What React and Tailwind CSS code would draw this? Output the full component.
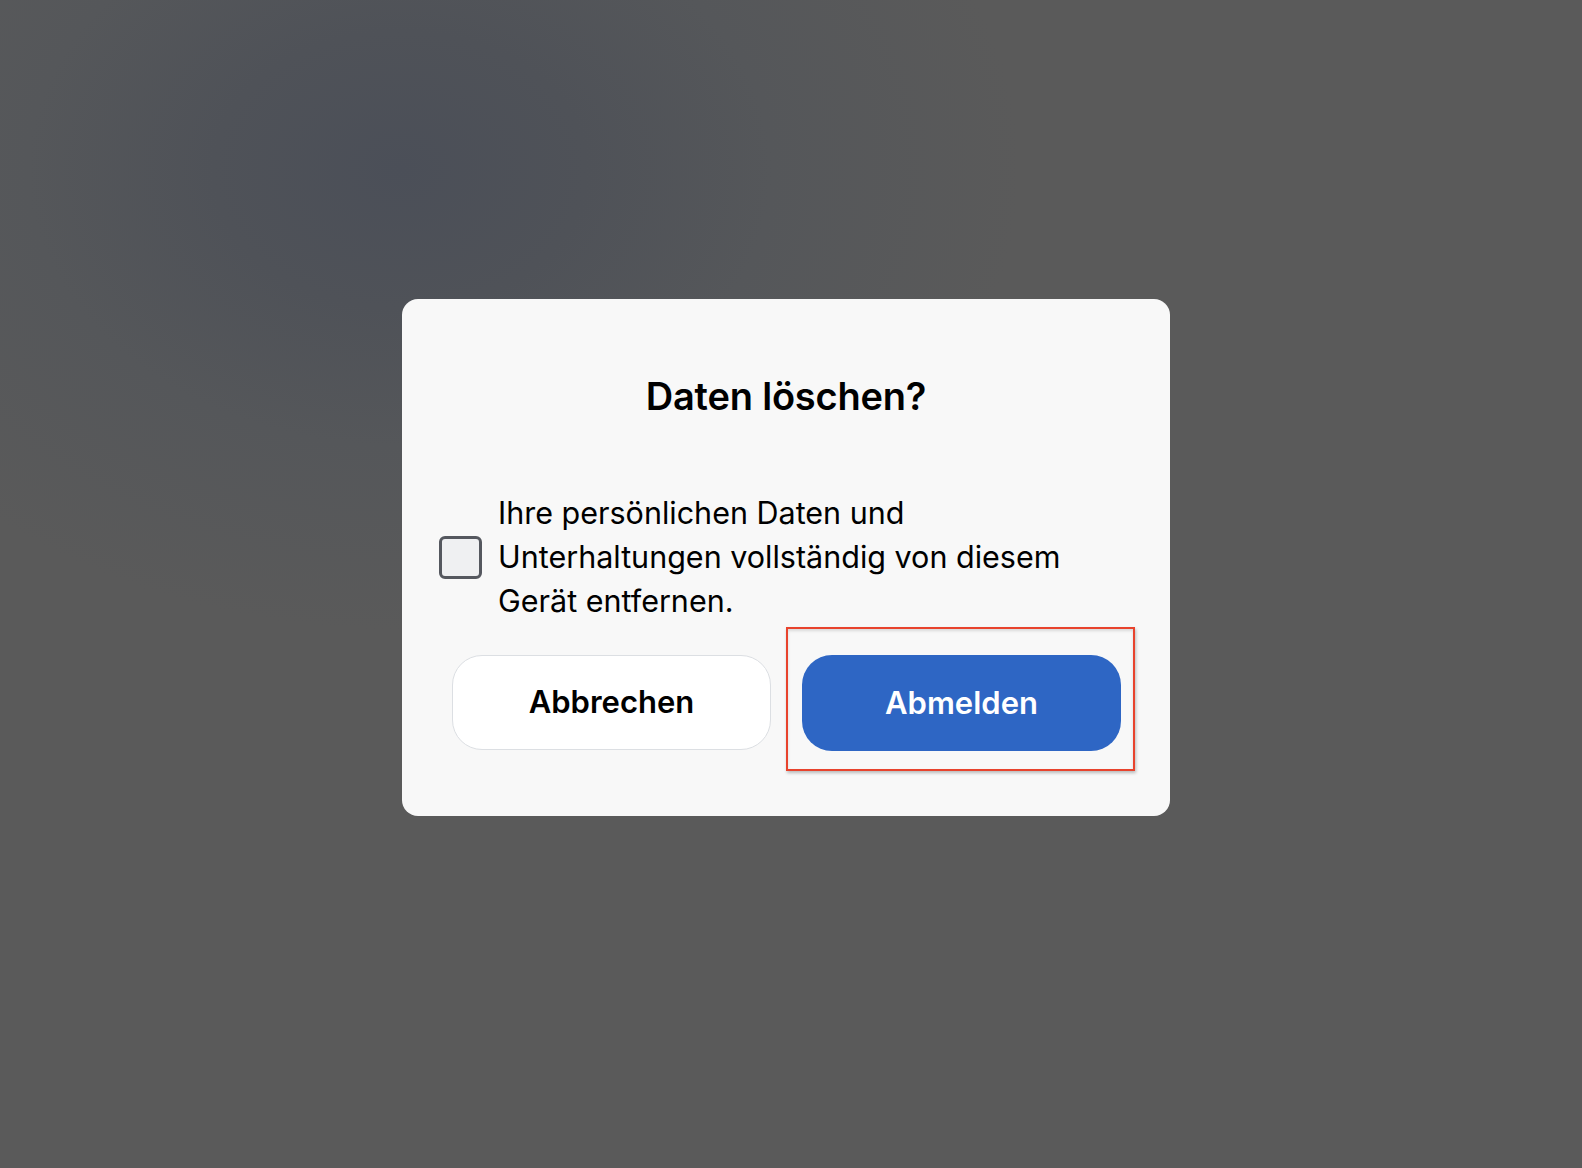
import React from "react";

export default function App() {
  return (
    <div
      className="min-h-screen w-full bg-[#5a5a5a] bg-[radial-gradient(ellipse_620px_460px_at_400px_170px,#4b4f58_0%,#4f5258_30%,#55575a_60%,#5a5a5a_100%)] pt-[299px] pl-[402px]"
      style={{ fontFamily: "Inter, 'Noto Sans', 'Liberation Sans', sans-serif" }}
    >
      <div className="w-[768px] h-[517px] rounded-[16px] bg-[#f8f8f8] flex flex-col">
        <h2 className="pt-[75px] text-center text-[38px] leading-[44px] font-semibold text-black tracking-[-0.2px]">
          Daten löschen?
        </h2>

        <label className="mt-[73px] px-[37px] flex items-center gap-[16px]">
          <span className="shrink-0 w-[43px] h-[43px] rounded-[6px] border-[3px] border-[#55585f] bg-[#eff0f2]" />
          <span className="w-[600px] text-[30.5px] leading-[44px] text-black">
            Ihre persönlichen Daten und Unterhaltungen vollständig von diesem Gerät entfernen.
          </span>
        </label>

        <div className="mt-[32px] pl-[50px] pr-[49px] grid grid-cols-2 gap-[31px]">
          <button className="h-[95px] rounded-[30px] border border-[#dcdfe3] bg-white text-[31px] font-semibold text-black">
            Abbrechen
          </button>
          <div className="relative">
            <button className="w-full h-[96px] rounded-[30px] bg-[#2e66c4] text-[31px] font-semibold text-white">
              Abmelden
            </button>
            {/* highlight frame around the confirm button */}
            <div className="pointer-events-none absolute left-[-16px] right-[-14px] top-[-28px] bottom-[-20px] border-2 border-[#e8432d] shadow-[1px_2px_3px_rgba(0,0,0,0.25),inset_0_2px_3px_rgba(0,0,0,0.12)]" />
          </div>
        </div>
      </div>
    </div>
  );
}
